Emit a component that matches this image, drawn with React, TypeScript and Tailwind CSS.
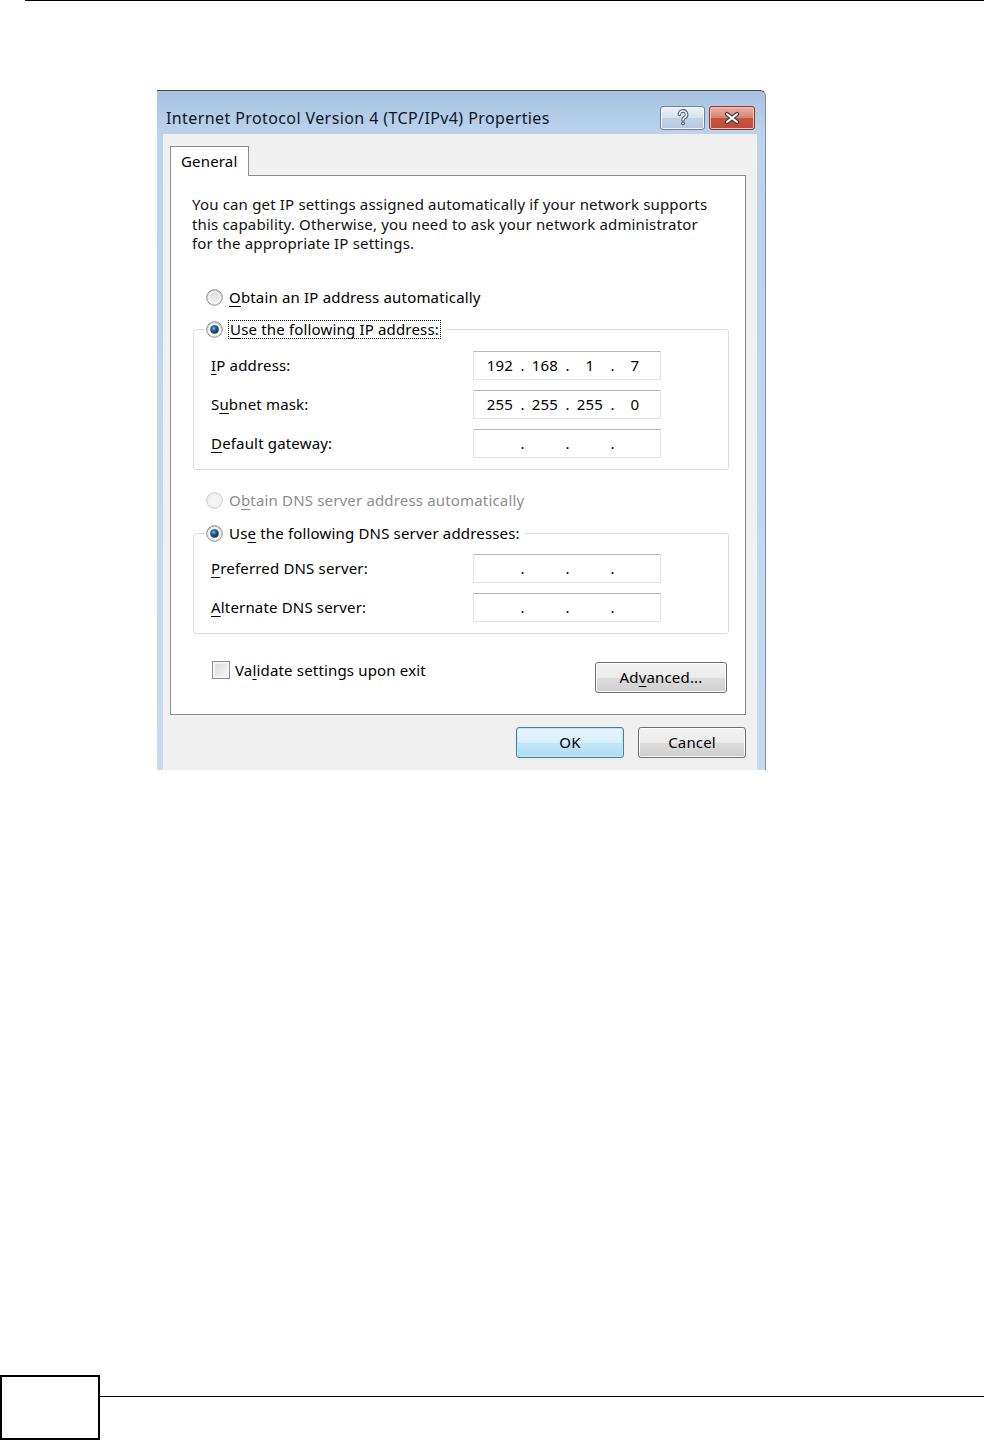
import { Fragment, type ReactNode } from 'react';

// access-key underline
const U = ({ children }: { children: ReactNode }) => (
  <span className="underline decoration-1 underline-offset-[3px]">{children}</span>
);

function Radio({ checked = false, disabled = false }: { checked?: boolean; disabled?: boolean }) {
  return (
    <svg width="17" height="17" viewBox="0 0 17 17" className="shrink-0">
      <defs>
        <linearGradient id="rRing" x1="0" y1="0" x2="0" y2="1">
          <stop offset="0" stopColor="#d6d6d6" />
          <stop offset="1" stopColor="#f6f6f6" />
        </linearGradient>
        <radialGradient id="rDot" cx="0.4" cy="0.35" r="0.7">
          <stop offset="0" stopColor="#6fc3f0" />
          <stop offset="0.45" stopColor="#1d5c95" />
          <stop offset="1" stopColor="#0c2749" />
        </radialGradient>
      </defs>
      <circle cx="8.5" cy="8.5" r="7.8" fill={disabled ? '#f4f4f4' : 'url(#rRing)'} stroke={disabled ? '#c8c8c8' : '#8c8c8c'} strokeWidth="1" />
      <circle cx="8.5" cy="8.5" r="5.6" fill="none" stroke={disabled ? '#ececec' : '#ffffff'} strokeWidth="1" />
      {checked && <circle cx="8.5" cy="8.5" r="4" fill="url(#rDot)" stroke="#2a4f73" strokeWidth="0.6" />}
    </svg>
  );
}

function IpField({ value }: { value?: string[] }) {
  return (
    <div className="w-[188px] h-[29px] bg-white border border-[#dfe3ea] border-t-[#b5b8bf] flex items-center pl-[6px]">
      {[0, 1, 2, 3].map(i => (
        <Fragment key={i}>
          <span className="w-[40px] text-center">{value?.[i] ?? ''}</span>
          {i < 3 && <span className="w-[5px] text-center">.</span>}
        </Fragment>
      ))}
    </div>
  );
}

function Field({ label, value }: { label: ReactNode; value?: string[] }) {
  return (
    <div className="flex items-center h-[29px]">
      <div className="w-[279px] pl-[17px]">{label}</div>
      <IpField value={value} />
    </div>
  );
}

function Btn({ children, primary = false, className = '' }: { children: ReactNode; primary?: boolean; className?: string }) {
  return (
    <div
      className={`h-[31px] rounded-[3px] border flex items-center justify-center ${
        primary
          ? 'border-[#3c7fb1] bg-[linear-gradient(#e8f5fc,#d8effb_50%,#c2e6f8_50%,#b0dcf4)] shadow-[inset_0_0_0_1px_#c4e8fb]'
          : 'border-[#707070] bg-[linear-gradient(#f2f2f2,#ebebeb_50%,#dddddd_50%,#cfcfcf)] shadow-[inset_0_0_0_1px_#fbfbfb]'
      } ${className}`}
    >
      {children}
    </div>
  );
}

export default function App() {
  return (
    <div className="w-[984px] h-[1440px] bg-white flex flex-col font-['Noto_Sans',sans-serif] text-[15px] tracking-[0.17px] text-black">
      <div className="ml-[25px] h-px bg-black" />

      {/* dialog */}
      <div className="ml-[157px] mt-[89px] w-[609px] rounded-tr-[6px] border-t border-r border-t-[#4a4a4a] border-r-[#7d8ea3] bg-[linear-gradient(#a7c3e2,#bcd3ec_44px,#c7daef)] flex flex-col">
        {/* title bar */}
        <div className="h-[43px] flex items-center pt-[11px] pl-[9px] pr-[10px]">
          <span className="flex-1 text-[16px] tracking-[0.4px] text-[#0c1826]">Internet Protocol Version 4 (TCP/IPv4) Properties</span>
          <div className="flex gap-[4px] -mt-[1px]">
            <div className="w-[45px] h-[24px] rounded-[3px] border border-[#6e8197] bg-[linear-gradient(#eef3f9,#d6e1ee_50%,#c2d3e6_50%,#b4c8df)] shadow-[inset_0_0_0_1px_#f4f8fc] flex items-center justify-center">
              <svg width="14" height="17" viewBox="0 0 14 17">
                <path d="M3.5 5.5a3.5 3.5 0 1 1 4.8 3.2c-1 .5-1.3 1-1.3 2.3" fill="none" stroke="#4b5d72" strokeWidth="3.6" strokeLinecap="round" />
                <path d="M3.5 5.5a3.5 3.5 0 1 1 4.8 3.2c-1 .5-1.3 1-1.3 2.3" fill="none" stroke="#f4f7fb" strokeWidth="1.6" strokeLinecap="round" />
                <circle cx="7" cy="14.3" r="1.9" fill="#4b5d72" />
                <circle cx="7" cy="14.3" r="0.9" fill="#f4f7fb" />
              </svg>
            </div>
            <div className="w-[46px] h-[24px] rounded-[3px] border border-[#8b3b2f] bg-[linear-gradient(#eab2a5,#d7806f_50%,#c8543f_50%,#c24a36)] shadow-[inset_0_0_0_1px_#efc0b5] flex items-center justify-center">
              <svg width="18" height="14" viewBox="0 0 18 14">
                <path d="M4 3l10 8M14 3L4 11" stroke="#3d3d3d" strokeWidth="4.2" strokeLinecap="round" />
                <path d="M4 3l10 8M14 3L4 11" stroke="#ffffff" strokeWidth="2.2" strokeLinecap="round" />
              </svg>
            </div>
          </div>
        </div>

        {/* body */}
        <div className="ml-[6px] mr-[8px] h-[636px] bg-[#f0f0f0] pt-[12px] pl-[7px]">
          <div className="w-[79px] h-[30px] -mb-px relative bg-white border border-b-0 border-[#898c95] pl-[10px] leading-[28px]">
            General
          </div>

          <div className="w-[576px] h-[540px] bg-white border border-[#898c95] px-[21px] pt-[19px]">
            <p className="leading-[19.5px] text-[#111]">
              You can get IP settings assigned automatically if your network supports
              <br />
              this capability. Otherwise, you need to ask your network administrator
              <br />
              for the appropriate IP settings.
            </p>

            <div className="mt-[34px] ml-[14px] h-[20px] flex items-center gap-[6px]">
              <Radio />
              <span>
                <U>O</U>btain an IP address automatically
              </span>
            </div>

            <fieldset className="mt-[12px] ml-[1px] w-[536px] border border-[#d5dfe5] rounded-[3px] pb-[11px]">
              <legend className="ml-[11px] pl-[1px] pr-[5px] h-[20px] flex items-center gap-[5px]">
                <Radio checked />
                <span className="border border-dotted border-black px-px leading-[17px]">
                  <U>U</U>se the following IP address:
                </span>
              </legend>
              <div className="mt-[11px] flex flex-col gap-[10px]">
                <Field label={<><U>I</U>P address:</>} value={['192', '168', '1', '7']} />
                <Field label={<>S<U>u</U>bnet mask:</>} value={['255', '255', '255', '0']} />
                <Field label={<><U>D</U>efault gateway:</>} />
              </div>
            </fieldset>

            <div className="mt-[21px] ml-[14px] h-[20px] flex items-center gap-[6px] text-[#8d8d8d]">
              <Radio disabled />
              <span>
                O<U>b</U>tain DNS server address automatically
              </span>
            </div>

            <fieldset className="mt-[13px] ml-[1px] w-[536px] border border-[#d5dfe5] rounded-[3px] pb-[11px]">
              <legend className="ml-[11px] pl-[1px] pr-[5px] h-[20px] flex items-center gap-[6px]">
                <Radio checked />
                <span>
                  Us<U>e</U> the following DNS server addresses:
                </span>
              </legend>
              <div className="mt-[10px] flex flex-col gap-[10px]">
                <Field label={<><U>P</U>referred DNS server:</>} />
                <Field label={<><U>A</U>lternate DNS server:</>} />
              </div>
            </fieldset>

            <div className="mt-[26px] flex items-start">
              <div className="ml-[20px] mt-[1px] w-[18px] h-[18px] border border-[#8f8f8f] bg-[linear-gradient(135deg,#d9d9d9,#f7f7f7)] shadow-[inset_0_0_0_2px_#f4f4f4]" />
              <span className="ml-[5px] leading-[20px]">
                Va<U>l</U>idate settings upon exit
              </span>
              <Btn className="ml-auto -mr-[3px] mt-[2px] w-[132px]">
                Ad<U>v</U>anced...
              </Btn>
            </div>
          </div>

          <div className="mt-[12px] pr-[11px] flex justify-end gap-[14px]">
            <Btn primary className="w-[108px]">OK</Btn>
            <Btn className="w-[108px]">Cancel</Btn>
          </div>
        </div>
      </div>

      {/* page footer */}
      <div className="mt-auto h-[65px] flex items-start">
        <div className="w-[100px] h-[65px] border-2 border-black" />
        <div className="flex-1 mt-[21px] h-px bg-black" />
      </div>
    </div>
  );
}
